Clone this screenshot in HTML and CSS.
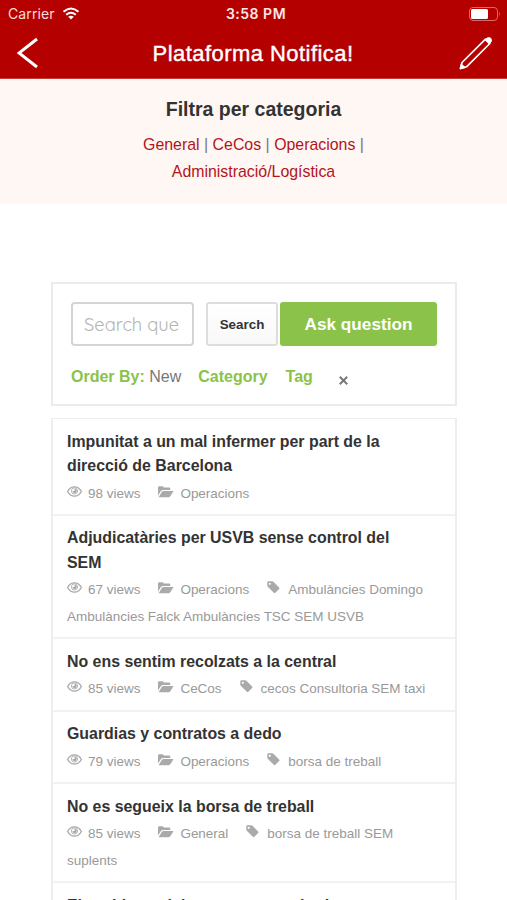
FILE: index.html
```html
<!DOCTYPE html>
<html lang="ca">
<head>
    <meta charset="UTF-8">
    <meta name="viewport" content="width=device-width, initial-scale=1.0">
    <title>Plataforma Notifica!</title>
    <link rel="stylesheet" href="styles.css">
</head>
<body>
    <!-- Shared icons -->
    <svg class="sprite">
        <symbol id="eye" viewBox="0 0 14 10">
            <path d="M.6 5C2 2.200 4.300.7 7 .7S12 2.200 13.400 5C12 7.800 9.700 9.300 7 9.300S2 7.800.6 5z" fill="none" stroke="currentColor" stroke-width="1.200"/>
            <circle cx="7" cy="4.500" r="2.900" fill="none" stroke="currentColor" stroke-width=".8"/>
            <path d="M7 2.400v2.200H5A2.100 2.100 0 1 0 7 2.400z" fill="currentColor"/>
        </symbol>
        <symbol id="folder" viewBox="0 0 16 12">
            <path d="M0 9.500V1.500Q0 .3 1.200.3H4.500Q5.500.3 5.600 1.500H11Q12.300 1.500 12.300 2.700V4H5Q3.700 4 2.800 5.200z" fill="currentColor"/>
            <path d="M.6 11.200L3.800 6Q4.400 5 5.500 5H15.600L12.500 10.100Q11.800 11.200 10.700 11.200z" fill="currentColor"/>
        </symbol>
        <symbol id="tag" viewBox="0 0 13 13">
            <path fill-rule="evenodd" d="M.3 1.400Q.3.300 1.400.3H5.200Q6 .3 6.700 1L12.100 6.400Q12.900 7.200 12.100 8L8.400 11.800Q7.600 12.500 6.800 11.800L1 6Q.3 5.300.3 4.500zM2.800 1.800a1 1 0 1 0 .01 0z" fill="currentColor"/>
        </symbol>
    </svg>

    <header class="header">
        <div class="statusbar">
            <div class="carrier">
                Carrier
                <svg class="wifi" viewBox="0 0 18 13">
                    <path d="M1.500 4.800Q9-1.800 16.500 4.800M4.200 7.800Q9 3.600 13.800 7.800" fill="none" stroke="currentColor" stroke-width="2"/>
                    <path d="M6.200 9.700Q9 7.600 11.800 9.700L9 12.500z" fill="currentColor"/>
                </svg>
            </div>
            <div class="time">3:58 PM</div>
            <svg class="battery" viewBox="0 0 32 14">
                <rect x=".5" y=".5" width="28" height="13" rx="3.500" fill="none" stroke="#d96a6a"/>
                <rect x="2" y="2" width="17" height="10" rx="1.500" fill="#fff"/>
                <path d="M30 4.800q1.800 2.200 0 4.400z" fill="#d96a6a"/>
            </svg>
        </div>
        <div class="navbar">
            <svg class="back" viewBox="0 0 22 32">
                <path d="M20 2L2 16L20 30" fill="none" stroke="#fff" stroke-width="3"/>
            </svg>
            <div class="title">Plataforma Notifica!</div>
            <svg class="pencil" viewBox="0 0 34 34">
                <path d="M3 26.500L26.500 3.200L30.800 7.500L7.500 30.800L1.500 32.500z" fill="none" stroke="#fff" stroke-width="1.700" stroke-linejoin="round"/>
                <path d="M26 3.700Q29 .5 31.800 2.200Q34 5 30.300 8zM2.300 28L1 33L6.200 31.600z" fill="#fff" stroke="#fff" stroke-width="1"/>
            </svg>
        </div>
    </header>

    <section class="filter">
        <h2>Filtra per categoria</h2>
        <p><a>General</a> | <a>CeCos</a> | <a>Operacions</a> |<br><a>Administració/Logística</a></p>
    </section>

    <main class="content">
        <div class="search-box">
            <div class="search-row">
                <input class="search-input" type="text" placeholder="Search questions...">
                <button class="btn-search">Search</button>
                <button class="btn-ask">Ask question</button>
            </div>
            <div class="order-row">
                <span class="order"><b>Order By:</b> New</span>
                <b class="category">Category</b>
                <b>Tag</b>
                <span class="clear">
                    <svg viewBox="0 0 8 8"><path d="M.7.700L7.300 7.300M7.300.7L.7 7.300" stroke="currentColor" stroke-width="1.700"/></svg>
                </span>
            </div>
        </div>

        <div class="questions">
            <article class="question">
                <h3>Impunitat a un mal infermer per part de la<br>direcció de Barcelona</h3>
                <p class="meta"><svg class="eye"><use href="#eye"/></svg><span class="views">98 views</span><svg class="folder"><use href="#folder"/></svg>Operacions</p>
            </article>
            <article class="question">
                <h3>Adjudicatàries per USVB sense control del<br>SEM</h3>
                <p class="meta"><svg class="eye"><use href="#eye"/></svg><span class="views">67 views</span><svg class="folder"><use href="#folder"/></svg>Operacions<svg class="tag"><use href="#tag"/></svg>Ambulàncies Domingo<br>Ambulàncies Falck Ambulàncies TSC SEM USVB</p>
            </article>
            <article class="question">
                <h3>No ens sentim recolzats a la central</h3>
                <p class="meta"><svg class="eye"><use href="#eye"/></svg><span class="views">85 views</span><svg class="folder"><use href="#folder"/></svg>CeCos<svg class="tag"><use href="#tag"/></svg>cecos Consultoria SEM taxi</p>
            </article>
            <article class="question">
                <h3>Guardias y contratos a dedo</h3>
                <p class="meta"><svg class="eye"><use href="#eye"/></svg><span class="views">79 views</span><svg class="folder"><use href="#folder"/></svg>Operacions<svg class="tag"><use href="#tag"/></svg>borsa de treball</p>
            </article>
            <article class="question">
                <h3>No es segueix la borsa de treball</h3>
                <p class="meta"><svg class="eye"><use href="#eye"/></svg><span class="views">85 views</span><svg class="folder"><use href="#folder"/></svg>General<svg class="tag"><use href="#tag"/></svg>borsa de treball SEM<br>suplents</p>
            </article>
            <article class="question">
                <h3>El problema del transporte sanitario</h3>
            </article>
        </div>
    </main>
</body>
</html>
```
FILE: styles.css
```css
* {
    box-sizing: border-box;
}

body {
    margin: 0;
    height: 900px;
    overflow: hidden;
    background: #fff;
    color: #333;
    font-family: "Liberation Sans", Arial, sans-serif;
}

.sprite {
    display: none;
}

/* Red top bar */
.header {
    height: 79px;
    background: #b50000;
    border-bottom: 1px solid #c83c38;
    color: #fff;
}

.statusbar {
    display: grid;
    grid-template-columns: 1fr auto 1fr;
    align-items: center;
    height: 27px;
    padding: 0 6px 0 8px;
    font-family: Inter, "Liberation Sans", sans-serif;
    font-size: 14px;
}

.carrier {
    display: flex;
    align-items: center;
    gap: 7px;
    color: #fbdcdc;
    letter-spacing: 0.1px;
}

.wifi {
    width: 18px;
    height: 13px;
    color: #fff;
}

.time {
    padding-left: 3px;
    font-size: 14px;
    font-weight: 600;
    letter-spacing: 0.5px;
    color: #fbe6e6;
}

.battery {
    width: 32px;
    height: 14px;
    justify-self: end;
}

.navbar {
    display: flex;
    justify-content: space-between;
    align-items: center;
    height: 52px;
    padding: 0 14px 0 17px;
}

.back {
    width: 22px;
    height: 32px;
}

.title {
    margin-left: 8px;
    padding-top: 2px;
    font-size: 22px;
    letter-spacing: 0.45px;
    -webkit-text-stroke: 0.4px #fff;
}

.pencil {
    width: 34px;
    height: 34px;
}

/* Category filter */
.filter {
    height: 125px;
    padding-top: 17px;
    background: #fff7f4;
    text-align: center;
}

.filter h2 {
    margin: 0;
    font-size: 19.5px;
    line-height: 26px;
}

.filter p {
    margin: 9px 0 0;
    font-size: 15.9px;
    line-height: 27px;
    color: #777;
}

.filter a {
    color: #b3141b;
}

.content {
    padding: 78px 50px 0 51px;
}

/* Search form */
.search-box {
    height: 124px;
    padding: 18px 18px 0;
    border: 2px solid #ebebeb;
}

.search-row {
    display: flex;
    height: 44px;
}

.search-input {
    width: 123px;
    margin-right: 12px;
    padding: 0 12px 0 11px;
    border: 2px solid #d4d4d4;
    border-radius: 4px;
    font-family: Quicksand, Lato, sans-serif;
    font-size: 18.3px;
}

.search-input::placeholder {
    color: #b4b4b4;
}

.btn-search {
    width: 72px;
    margin-right: 2px;
    padding: 0;
    border: 2px solid #ddd;
    border-radius: 3px;
    background: linear-gradient(#fff, #f8f8f8);
    color: #333;
    font: bold 13.400px "Liberation Sans", Arial, sans-serif;
}

.btn-ask {
    flex: 1;
    padding: 0;
    border: 0;
    border-radius: 3px;
    background: #8bc34a;
    color: #fff;
    font: bold 17.200px "Liberation Sans", Arial, sans-serif;
}

.order-row {
    display: flex;
    margin-top: 21px;
    font-size: 16px;
    line-height: 20px;
    color: #777;
}

.order-row b {
    color: #8bc34a;
}

.order {
    margin-right: 17px;
}

.category {
    margin-right: 18px;
}

.clear {
    margin: 9px 0 0 26px;
    line-height: 0;
}

.clear svg {
    width: 9px;
    height: 9px;
}

/* Questions list */
.questions {
    margin-top: 12px;
    border: 1px solid #eee;
    border-width: 1px 2px;
}

.question {
    padding: 10.800px 14px 7.100px;
    border-bottom: 2px solid #f2f2f2;
}

.question h3 {
    margin: 0;
    font-size: 15.9px;
    line-height: 24.500px;
    white-space: nowrap;
}

.meta {
    margin: 0.800px 0 0;
    font-size: 13.480px;
    line-height: 27px;
    color: #999;
    white-space: nowrap;
}

.meta svg {
    color: #aaa;
}

.meta .eye {
    width: 15px;
    height: 11px;
    margin-right: 6px;
    vertical-align: 1px;
}

.meta .folder {
    width: 16px;
    height: 12px;
    margin: 0 6px 0 18px;
}

.meta .tag {
    width: 13px;
    height: 13px;
    margin: 0 8px 0 18px;
}
```
